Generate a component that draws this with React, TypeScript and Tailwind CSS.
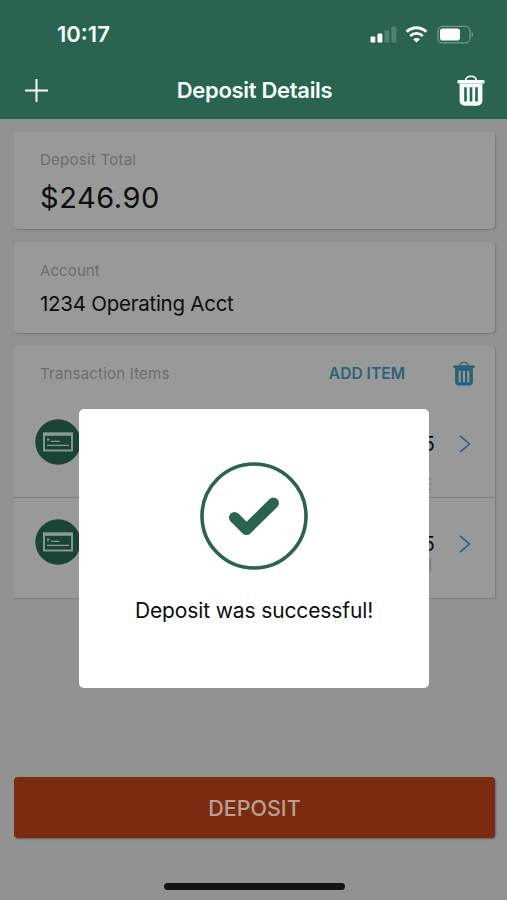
import clsx from "clsx";

interface IconProps {
  className?: string;
}

const items = [
  { id: 1, amount: "$123.45", note: "E" },
  { id: 2, amount: "$123.45", note: "l" },
];

function TrashIcon({ className }: IconProps) {
  return (
    <svg viewBox="0 0 28 31" fill="none" className={className}>
      <path
        d="M8.5 5.5C9 2.6 11 1.2 14 1.2s5 1.4 5.5 4.3"
        stroke="currentColor"
        strokeWidth="1.6"
      />
      <rect x="0.5" y="5" width="27" height="3.6" rx="1.2" fill="currentColor" />
      <path
        fillRule="evenodd"
        fill="currentColor"
        d="M2.6 8.4h22.8v17.4a5 5 0 0 1-5 5H7.6a5 5 0 0 1-5-5zM7.2 12.3v14.2h2.6V12.3zM12.7 12.3v14.2h2.6V12.3zM18.2 12.3v14.2h2.6V12.3z"
      />
    </svg>
  );
}

function CheckItemIcon({ className }: IconProps) {
  return (
    <svg viewBox="0 0 46 46" fill="none" className={className}>
      <circle cx="23" cy="23" r="22.7" fill="#1b4437" />
      <rect x="9" y="14.5" width="28" height="17" stroke="#8a9a94" strokeWidth="1.9" />
      <path d="M8.05 15.2h29.9" stroke="#8a9a94" strokeWidth="3.2" />
      <path d="M12 20.5h2.6M13 19.4v3.2" stroke="#8a9a94" strokeWidth="1.1" />
      <path d="M16 22.3h8.6M12 26.3h22" stroke="#8a9a94" strokeWidth="1.3" />
    </svg>
  );
}

function StatusIcons() {
  return (
    <svg viewBox="0 0 104 20" fill="none" className="h-5 w-[104px]">
      <rect x="0.5" y="11.6" width="4.8" height="6" rx="1.2" fill="#fff" />
      <rect x="7.5" y="8.6" width="4.8" height="9" rx="1.2" fill="#fff" />
      <rect x="14.5" y="5.2" width="4.8" height="12.4" rx="1.2" fill="#4f8371" />
      <rect x="21.5" y="1.4" width="4.8" height="16.2" rx="1.2" fill="#4f8371" />
      <path d="M36.7 6.8a13.8 13.8 0 0 1 19.6 0" stroke="#fff" strokeWidth="3" />
      <path d="M40.3 10.9a8.8 8.8 0 0 1 12.4 0" stroke="#fff" strokeWidth="2.8" />
      <path d="M46.5 17.6l-3.4-3.3a4.8 4.8 0 0 1 6.8 0z" fill="#fff" />
      <rect x="68" y="1.4" width="32" height="16.4" rx="4.6" stroke="#6f9a8b" strokeWidth="1.3" />
      <rect x="70" y="3.6" width="20" height="12" rx="2.8" fill="#fff" />
      <path d="M101.6 7c2 .8 2 4.4 0 5.2z" fill="#6f9a8b" />
    </svg>
  );
}

function Header() {
  return (
    <header className="h-[119px] bg-[#2a6450] text-[#f4fffb]">
      <div className="flex h-[62px] items-end justify-between pr-[33px] pb-[17px] pl-[57px]">
        <span className="text-[22px] leading-[21px] font-semibold">10:17</span>
        <StatusIcons />
      </div>
      <div className="flex h-[57px] items-center justify-between pr-[22px] pl-[25px]">
        <svg viewBox="0 0 23 23" fill="none" className="h-[23px] w-[23px]">
          <path d="M11.5 0v23M0 11.5h23" stroke="currentColor" strokeWidth="2" />
        </svg>
        <h1 className="ml-1 text-[22px] font-semibold tracking-[-0.3px]">
          Deposit Details
        </h1>
        <TrashIcon className="h-[31px] w-7" />
      </div>
    </header>
  );
}

export default function App() {
  return (
    <div className="relative flex h-[900px] w-[507px] flex-col overflow-hidden bg-[#929292] font-['Inter',sans-serif] text-[#0d0d0d]">
      <Header />

      <main className="flex flex-col pt-[13px] pr-3 pl-[14px]">
        <section className="h-[97px] rounded-[4px] bg-[#999] pt-[18px] pl-[26px] shadow-[1px_1px_2px_#777]">
          <p className="text-[15px] leading-5 tracking-[0.25px] text-[#6d6d6d]">
            Deposit Total
          </p>
          <p className="mt-[11px] text-[29px] leading-[34px] tracking-[0.55px]">
            $246.90
          </p>
        </section>

        <section className="mt-[13px] h-[91px] rounded-[4px] bg-[#999] pt-[19px] pl-[26px] shadow-[1px_1px_2px_#777]">
          <p className="text-[15px] leading-5 tracking-[0.1px] text-[#6d6d6d]">
            Account
          </p>
          <p className="mt-2.5 text-[20.5px] leading-[26px] tracking-[-0.25px]">
            1234 Operating Acct
          </p>
        </section>

        <section className="mt-[13px] h-[252px] rounded-t-[4px] bg-[#999] shadow-[1px_1px_1px_#7d7d7d]">
          <div className="flex h-[52px] items-center pt-[3px] pr-5 pl-[26px]">
            <p className="flex-1 pt-px text-[15px] tracking-[0.2px] text-[#6d6d6d]">
              Transaction Items
            </p>
            <button className="mr-12 text-[15.5px] font-semibold tracking-[0.05px] text-[#2b6279]">
              ADD ITEM
            </button>
            <TrashIcon className="h-[25px] w-[22px] text-[#2b6279]" />
          </div>
          {items.map((item, index) => (
            <div
              key={item.id}
              className={clsx(
                "flex h-[100px] pl-[21px]",
                index === 0 && "border-b border-[#7b7b7b]"
              )}
            >
              <CheckItemIcon className="mt-[21px] h-[46px] w-[46px]" />
              <div className="flex flex-1 flex-col items-end pt-[34px]">
                <span className="text-[20px] leading-6">{item.amount}</span>
                <span
                  className={clsx(
                    "mr-[3px] text-[16px] leading-5 text-[#777]",
                    index === 0 ? "mt-[18px]" : "-mt-px"
                  )}
                >
                  {item.note}
                </span>
              </div>
              <svg
                viewBox="0 0 12 18"
                fill="none"
                className="mt-[37px] mr-6 ml-6 h-[18px] w-3"
              >
                <path d="M1 .8l9.5 8.2L1 17.2" stroke="#2b6279" strokeWidth="1.6" />
              </svg>
            </div>
          ))}
        </section>
      </main>

      <footer className="mt-auto flex flex-col items-center pr-3 pb-[10px] pl-[14px]">
        <button className="h-[61px] w-full rounded-[4px] bg-[#7a2b10] pt-0.5 text-[21.5px] font-medium text-[#b9a097] shadow-[1px_1px_2px_#666]">
          DEPOSIT
        </button>
        <div className="mt-[45px] h-[7px] w-[181px] rounded-full bg-[#141414]" />
      </footer>

      <div
        role="dialog"
        className="absolute top-[409px] left-[79px] flex h-[279px] w-[350px] flex-col items-center rounded-[5px] bg-white pt-[53px]"
      >
        <svg viewBox="0 0 108 108" fill="none" className="h-[108px] w-[108px]">
          <circle cx="54" cy="54" r="52" stroke="#2a6450" strokeWidth="3.6" />
          <path
            d="M34.5 55.5L46.5 67.5L73.5 41"
            stroke="#2a6450"
            strokeWidth="11"
            strokeLinecap="round"
            strokeLinejoin="round"
          />
        </svg>
        <p className="mt-[28px] text-[21px] leading-[26px] tracking-[-0.12px]">
          Deposit was successful!
        </p>
      </div>
    </div>
  );
}
